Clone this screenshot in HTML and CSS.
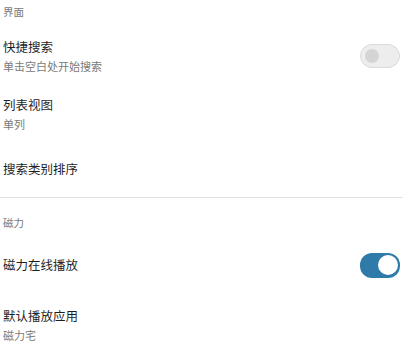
FILE: index.html
```html
<!DOCTYPE html>
<html lang="zh">
<head>
<meta charset="utf-8">
<link rel="stylesheet" href="styles.css">
</head>
<body>
<div class="screen">
  <div class="cat cat-first">界面</div>
  <div class="item two">
    <div class="texts">
      <div class="title">快捷搜索</div>
      <div class="sub">单击空白处开始搜索</div>
    </div>
    <div class="switch off"><span class="knob"></span></div>
  </div>
  <div class="item two">
    <div class="texts">
      <div class="title">列表视图</div>
      <div class="sub">单列</div>
    </div>
  </div>
  <div class="item one">
    <div class="texts">
      <div class="title">搜索类别排序</div>
    </div>
  </div>
  <div class="divider"></div>
  <div class="cat cat-next">磁力</div>
  <div class="item one short">
    <div class="texts">
      <div class="title">磁力在线播放</div>
    </div>
    <div class="switch on"><span class="knob"></span></div>
  </div>
  <div class="item two">
    <div class="texts">
      <div class="title">默认播放应用</div>
      <div class="sub">磁力宅</div>
    </div>
  </div>
</div>
</body>
</html>
```

FILE: styles.css
```css
html, body {
  margin: 0;
  padding: 0;
  background: #ffffff;
}
body {
  font-family: "Noto Sans CJK SC", "Noto Sans", sans-serif;
  width: 403px;
  height: 343px;
  overflow: hidden;
}
.screen {
  display: flex;
  flex-direction: column;
}
.cat {
  font-size: 10.5px;
  line-height: 14px;
  color: #7a7a7a;
  padding-left: 3px;
}
.cat-first {
  padding-top: 5px;
  padding-bottom: 5px;
}
.cat-next {
  padding-top: 18px;
  padding-bottom: 7px;
}
.item {
  display: flex;
  align-items: center;
  justify-content: space-between;
  padding-left: 3px;
  padding-right: 3px;
  box-sizing: border-box;
}
.item.two {
  height: 58px;
  padding-top: 15px;
  padding-bottom: 9px;
}
.item.one {
  height: 57px;
  padding-top: 21px;
  padding-bottom: 20px;
}
.item.one.short {
  height: 56px;
  padding-top: 20px;
  padding-bottom: 20px;
}
.texts {
  display: flex;
  flex-direction: column;
  gap: 4px;
}
.title {
  font-size: 12.5px;
  line-height: 16px;
  color: #1f1f1f;
}
.sub {
  font-size: 11px;
  line-height: 14px;
  color: #7a7a7a;
}
.divider {
  height: 1px;
  background: #e2e2e2;
}
.switch {
  width: 40px;
  height: 24px;
  border-radius: 12px;
  box-sizing: border-box;
  display: flex;
  align-items: center;
  flex-shrink: 0;
}
.switch.off {
  background: #ededed;
  border: 1px solid #dadada;
  padding-left: 4px;
}
.switch.off .knob {
  width: 14px;
  height: 14px;
  border-radius: 50%;
  background: #d5d5d5;
}
.switch.on {
  background: #2e7aa8;
  justify-content: flex-end;
  padding-right: 2px;
  height: 25px;
}
.switch.on .knob {
  width: 20px;
  height: 20px;
  border-radius: 50%;
  background: #ffffff;
}
```
